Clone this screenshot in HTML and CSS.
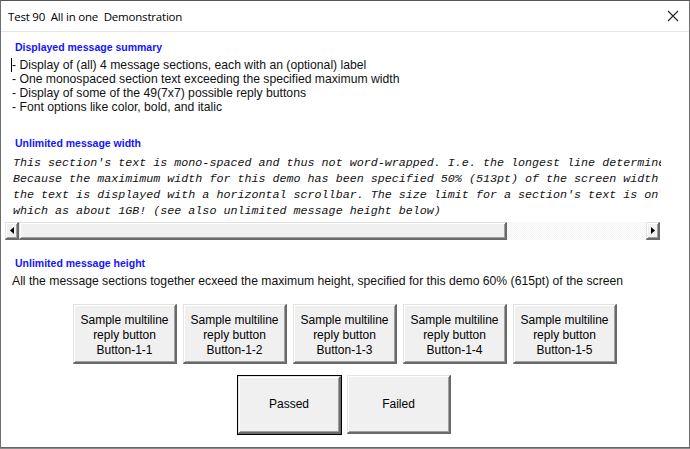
FILE: index.html
```html
<!DOCTYPE html>
<html>
<head>
<meta charset="utf-8">
<link rel="stylesheet" href="styles.css">
</head>
<body>
<div class="window">
  <div class="titlebar">
    <span class="title">Test 90&nbsp; All in one&nbsp; Demonstration</span>
    <svg class="close" width="12" height="12" viewBox="0 0 12 12"><path d="M1 1L11 11M11 1L1 11" stroke="#222" stroke-width="1.1" fill="none"/></svg>
  </div>
  <div class="content">
    <div class="heading h1">Displayed message summary</div>
    <div class="text summary">
      <div><span class="caret"></span>- Display of (all) 4 message sections, each with an (optional) label</div>
      <div>- One monospaced section text exceeding the specified maximum width</div>
      <div>- Display of some of the 49(7x7) possible reply buttons</div>
      <div>- Font options like color, bold, and italic</div>
    </div>
    <div class="heading h2">Unlimited message width</div>
    <div class="monobox">
      <div class="mono">This section's text is mono-spaced and thus not word-wrapped. I.e. the longest line determines the width of the section.
Because the maximimum width for this demo has been specified 50% (513pt) of the screen width
the text is displayed with a horizontal scrollbar. The size limit for a section's text is only limited by VBA
which as about 1GB! (see also unlimited message height below)</div>
    </div>
    <div class="scrollbar">
      <div class="sb-btn"><svg width="4" height="7" viewBox="0 0 4 7"><path d="M4 0L0 3.5L4 7Z" fill="#000"/></svg></div>
      <div class="sb-thumb"></div>
      <div class="sb-track"></div>
      <div class="sb-btn"><svg width="4" height="7" viewBox="0 0 4 7"><path d="M0 0L4 3.5L0 7Z" fill="#000"/></svg></div>
    </div>
    <div class="heading h3">Unlimited message height</div>
    <div class="text height-text">All the message sections together ecxeed the maximum height, specified for this demo 60% (615pt) of the screen</div>
    <div class="btnrow">
      <div class="btn multi">Sample multiline<br>reply button<br>Button-1-1</div>
      <div class="btn multi">Sample multiline<br>reply button<br>Button-1-2</div>
      <div class="btn multi">Sample multiline<br>reply button<br>Button-1-3</div>
      <div class="btn multi">Sample multiline<br>reply button<br>Button-1-4</div>
      <div class="btn multi">Sample multiline<br>reply button<br>Button-1-5</div>
    </div>
    <div class="btnrow2">
      <div class="btn big default">Passed</div>
      <div class="btn big">Failed</div>
    </div>
  </div>
</div>
</body>
</html>
```
FILE: styles.css
```css
html, body {
  margin: 0;
  padding: 0;
  background: #8a8a8a;
  width: 690px;
  height: 449px;
  overflow: hidden;
}
.window {
  width: 688px;
  height: 446px;
  background: #fff;
  border-top: 1px solid #555;
  border-left: 1px solid #6e6e6e;
  border-right: 1px solid #6e6e6e;
  border-bottom: 1px solid #666;
  font-family: "Liberation Sans", Arial, sans-serif;
  color: #000;
}
.titlebar {
  height: 30px;
  border-bottom: 1px solid #e6e6e6;
  display: flex;
  align-items: center;
  justify-content: space-between;
  padding: 0 10px 0 7px;
}
.title {
  font-family: "Open Sans", "Liberation Sans", sans-serif;
  font-size: 11.5px;
  letter-spacing: -0.2px;
}
.close {
  margin-top: -1px;
}
.content {
  padding: 0 0 0 4px;
}
.heading {
  color: #1414ff;
  font-weight: bold;
  font-size: 10.5px;
  line-height: 14px;
  padding-left: 10px;
}
.h1 { margin-top: 8px; }
.h2 { margin-top: 22px; }
.h3 { margin-top: 16px; }
.text {
  font-size: 12.2px;
  line-height: 14px;
  padding-left: 7px;
  color: #111;
}
.summary { margin-top: 4px; }
.height-text {
  margin-top: 3px;
  line-height: 16px;
}
.caret {
  display: inline-block;
  width: 0;
  height: 14px;
  border-left: 1px solid #000;
  vertical-align: top;
  margin-left: -1px;
}
.monobox {
  margin-top: 5px;
  width: 648px;
  margin-left: 8px;
  overflow: hidden;
}
.mono {
  font-family: "Liberation Mono", "Courier New", monospace;
  font-style: italic;
  font-size: 11.7px;
  line-height: 16px;
  white-space: pre;
  color: #111;
}
.scrollbar {
  margin-top: 3px;
  width: 655px;
  height: 18px;
  display: flex;
}
.sb-btn {
  width: 11px;
  height: 15px;
  background: #f0f0f0;
  border-style: solid;
  border-width: 1px 2px 2px 1px;
  border-color: #e3e3e3 #6a6a6a #6a6a6a #e3e3e3;
  box-shadow: inset 1px 1px #fff, inset -1px -1px #a0a0a0;
  display: flex;
  align-items: center;
  justify-content: center;
}
.sb-thumb {
  width: 485px;
  height: 15px;
  background: #f0f0f0;
  border-style: solid;
  border-width: 1px 2px 2px 1px;
  border-color: #e3e3e3 #6a6a6a #6a6a6a #e3e3e3;
  box-shadow: inset 1px 1px #fff, inset -1px -1px #a0a0a0;
}
.sb-track {
  flex: 1;
  background: repeating-conic-gradient(#f2f2f2 0 25%, #ffffff 0 50%) 0 0 / 2px 2px;
}
.btnrow {
  margin-top: 15px;
  display: flex;
  justify-content: center;
  gap: 6px;
  padding-right: 4px;
}
.btnrow2 {
  margin-top: 11px;
  display: flex;
  justify-content: center;
  gap: 6px;
  padding-right: 6px;
}
.btn {
  width: 101px;
  height: 57px;
  background: #f0f0f0;
  border-style: solid;
  border-width: 1px 2px 2px 1px;
  border-color: #e3e3e3 #696969 #696969 #e3e3e3;
  box-shadow: inset 1px 1px #fff, inset -1px -1px #a0a0a0;
  font-family: "Liberation Sans", Tahoma, sans-serif;
  font-size: 12px;
  line-height: 15px;
  text-align: center;
  display: flex;
  align-items: center;
  justify-content: center;
  color: #000;
}
.multi {
  height: 54px;
  padding-top: 3px;
}
.big {
  height: 56px;
}
.default {
  outline: 1px solid #000;
  width: 100px;
  height: 55px;
  margin-left: 1px;
  margin-top: 1px;
}
```
